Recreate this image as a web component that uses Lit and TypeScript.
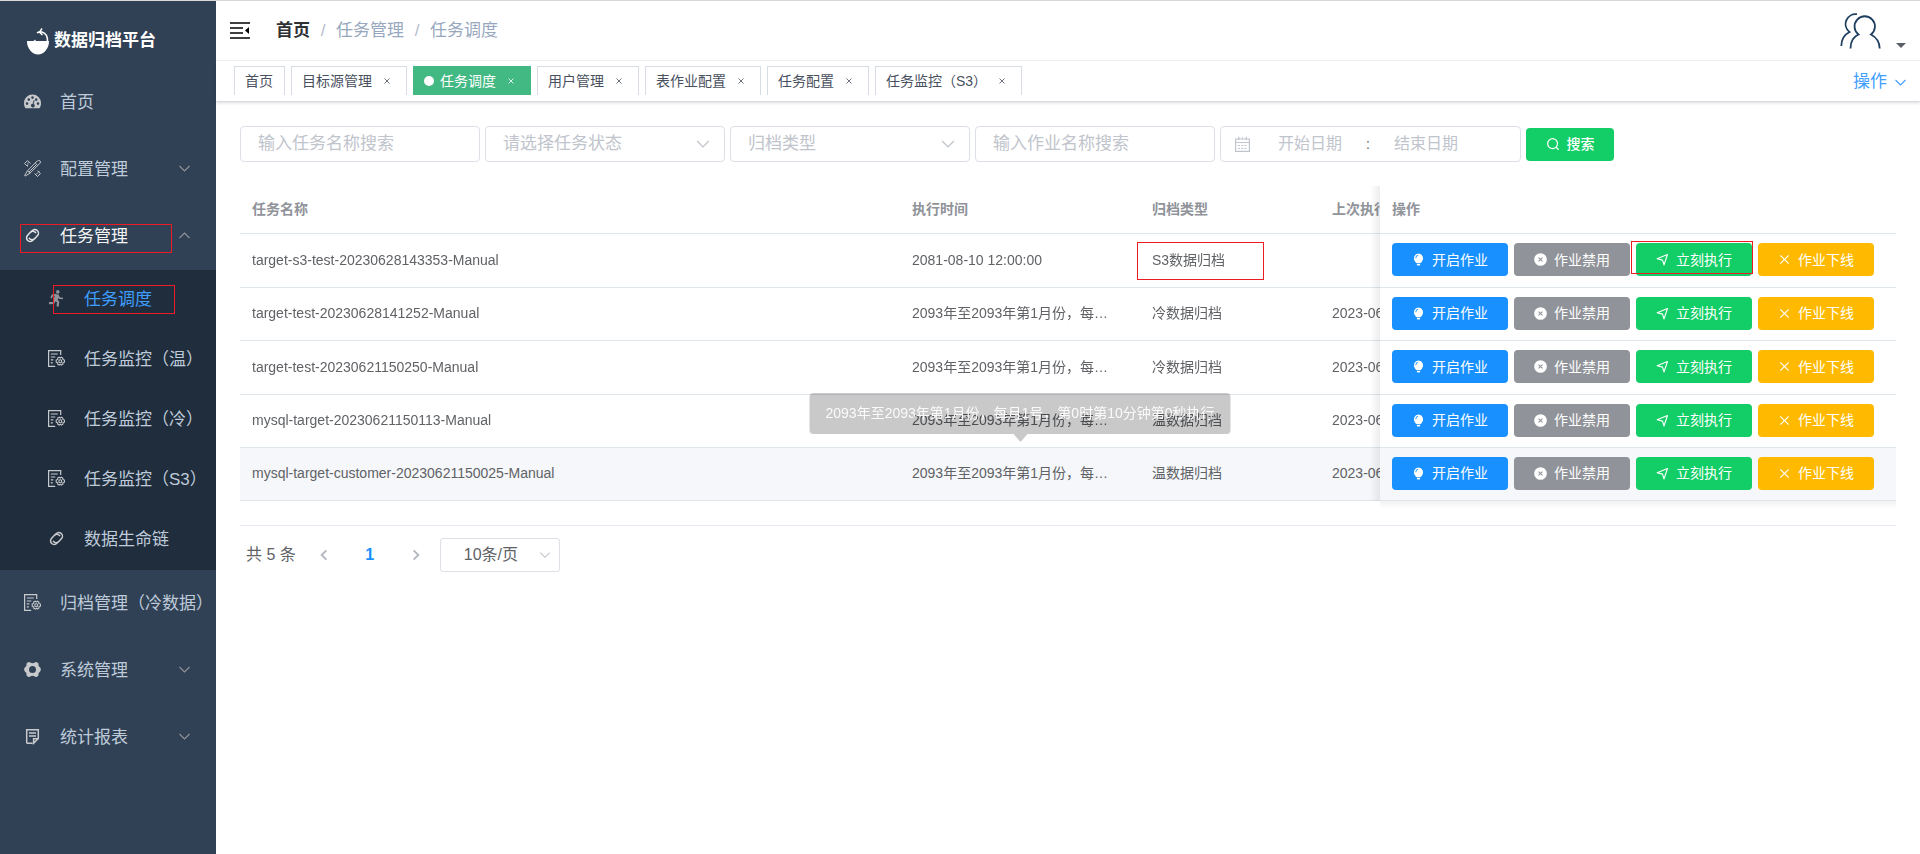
import { LitElement, html, svg, css, nothing } from 'lit';
import { customElement } from 'lit/decorators.js';
import { classMap } from 'lit/directives/class-map.js';

const icon = (name: string, size = 17) => html`
  <svg class="icon" width=${size} height=${size} viewBox="0 0 17 17" fill="none" stroke="currentColor"
    stroke-width="1.2" aria-hidden="true">${shapes[name]}</svg>`;

const shapes: Record<string, unknown> = {
  dashboard: svg`<path fill="currentColor" stroke="none" fill-rule="evenodd"
    d="M8.500 1.500A8.500 8.500 0 0 0 0 10c0 2 .5 3.700 1.400 5.300h14.200A9 9 0 0 0 17 10 8.500 8.500 0 0 0 8.500 1.500ZM3 9.300a1.300 1.300 0 1 1 0 2.600 1.300 1.300 0 0 1 0-2.600Zm1.800-4a1.300 1.300 0 1 1 0 2.600 1.300 1.300 0 0 1 0-2.600ZM8.500 3.300a1.300 1.300 0 1 1 0 2.600 1.300 1.300 0 0 1 0-2.600Zm5.500 6a1.300 1.300 0 1 1 0 2.600 1.300 1.300 0 0 1 0-2.600Zm-1.800-4a1.300 1.300 0 1 1 0 2.600 1.300 1.300 0 0 1 0-2.600ZM9.800 7l.8.2-.9 3.700a1.900 1.900 0 1 1-1-.2Z"/>`,
  tools: svg`<path stroke-width="1" d="m.6 3.500 2.900-2.900 3 3M10.500 13.500l3 3 2.900-2.900-3-3M.6 3.500l3 3M3 6l1.300-1.300M4.600 2.800 3.200 4.200M12 14.500l1.400-1.400M13.900 12.600l1.400-1.400M11.200 3 13.400.8a1.700 1.700 0 0 1 2.500 2.500L6 13.200l-4.900 2.900-.5-.5 2.900-4.900Z"/>
    <path stroke-width="1" d="m11.200 3 2.600 2.600M3.500 10.700 6 13.200M5 12l7-7"/>`,
  link: svg`<g transform="rotate(-48 8.500 8.500)" stroke-width="1.500">
    <path d="M7 11.900H5.200a3.600 3.600 0 0 1 0-7.200h4a3.600 3.600 0 0 1 3.400 4.800"/>
    <path d="M10 5.100h1.800a3.600 3.600 0 0 1 0 7.200h-4a3.600 3.600 0 0 1-3.400-4.800"/></g>`,
  run: svg`<g stroke-width="2.200" stroke-linejoin="round"><circle cx="9.800" cy="1.900" r="1.800" fill="currentColor" stroke="none"/>
    <path d="M8.800 5 7 9.500l3.200 2.300-.6 4.700M6.800 10.700 5.300 13 1 13.200"/>
    <path stroke-width="1.700" d="M8.300 4.800 4.500 5.200 3 8M9.700 5.500l2 2.700 3.200.2"/></g>
    <path fill="currentColor" stroke="none" d="m7 4.300 3.800.2.300 2.500-2 4.200L6 9.500Z"/>`,
  monitor: svg`<path d="M12.700 5V.6H.6v15.800h6.600"/><path d="M2.800 4h7M2.800 7h4.500M2.800 9.800h2.500M2.800 12.800h2"/>
    <g stroke-width="1.100"><circle cx="12.300" cy="11.200" r="1.500"/>
    <path d="m11.300 7.200 1 .9 1-.9 1.500.9.100 1.300 1.500.6v2.200l-1.500.7-.1 1.300-1.500.9-1-.9-1 .9-1.600-.9v-1.300l-1.500-.7V10l1.500-.6V8.100Z"/></g>`,
  gear: svg`<path fill="currentColor" stroke="none" fill-rule="evenodd"
    d="M4.200 1.200q1-.7 2 .2Q8.500 3 10.800 1.400q1-.9 2-.2l1.200.8q.8.800.5 1.800-.3 1.500 1.200 2.300 1 .6 1.200 2.400-.2 1.800-1.200 2.400-1.500.8-1.200 2.300.3 1-.5 1.800l-1.200.8q-1 .7-2-.2-2.300-1.600-4.600 0-1 .9-2 .2L3 15q-.8-.8-.5-1.800.3-1.500-1.200-2.300Q.3 10.300.1 8.500.3 6.700 1.300 6.100 2.800 5.300 2.500 3.800 2.200 2.800 3 2ZM8.500 5a3.500 3.500 0 1 0 0 7 3.500 3.500 0 0 0 0-7Z"/>`,
  report: svg`<path stroke-width="1.500" d="M8.500 15.300H3.300L2.700 14.700V1.700h11.600v8.800L9.600 15.300V10.800h4.600M5 5h7M5 8h7"/>`,
  down: svg`<path stroke-width="1.100" d="m3.500 6 5 5 5-5"/>`,
  up: svg`<path stroke-width="1.100" d="m3.500 11 5-5 5 5"/>`,
  left: svg`<path stroke-width="2" d="m11 3.500-5 5 5 5"/>`,
  right: svg`<path stroke-width="2" d="m6 3.500 5 5-5 5"/>`,
  calendar: svg`<path d="M1.600 3h13.800v12.400H1.600ZM1.600 6.500h13.800M4.700.8v3.400M12.300.8v3.400M8.500 1.500v1.500"/>
    <path stroke-dasharray="2 1.200" d="M4 9.500h9M4 12.500h9"/>`,
  search: svg`<circle cx="8" cy="8" r="6" stroke-width="1.500"/><path stroke-width="1.500" d="m12.300 12.500 3 3"/>`,
  bulb: svg`<path fill="currentColor" stroke="none" fill-rule="evenodd"
    d="M8.500.5A6.500 6.500 0 0 0 3.900 11Q5.300 12.300 5.500 13.200h6Q11.700 12.300 13.100 11A6.500 6.500 0 0 0 8.500.5ZM4.500 7Q4.500 3 8 2.500l.2.900Q5.600 4 5.500 7ZM6.300 14h4.400v1.300L9.800 16.500H7.200L6.300 15.300Z"/>`,
  ban: svg`<circle cx="8.500" cy="8.500" r="8.300" fill="currentColor" stroke="none"/><path stroke="#909399" stroke-width="1.400" d="m5.900 5.900 5.200 5.200M11.100 5.900l-5.200 5.200"/>`,
  send: svg`<path stroke-width="1.500" stroke-linejoin="round" d="M1.500 7.500 15 2 10.500 15.500 8.500 9.300Z"/>`,
  cross: svg`<path stroke-width="1.500" d="m3 3 11 11M14 3 3 14"/>`,
};

const closeMark = html`<svg width="16" height="16" viewBox="0 0 16 16" fill="none" stroke="currentColor" aria-hidden="true">
  <path d="m5.500 5.500 5 5M10.500 5.500l-5 5"/></svg>`;

const schedule = '2093年至2093年第1月份，每月1号，第0时第10分钟第0秒执行';

const submenu = [
  { icon: 'run', label: '任务调度', current: true },
  { icon: 'monitor', label: '任务监控（温）' },
  { icon: 'monitor', label: '任务监控（冷）' },
  { icon: 'monitor', label: '任务监控（S3）' },
  { icon: 'link', label: '数据生命链' },
];

const tabs = ['首页', '目标源管理', '任务调度', '用户管理', '表作业配置', '任务配置', '任务监控（S3）'];

const jobs = [
  { name: 'target-s3-test-20230628143353-Manual', time: '2081-08-10 12:00:00', type: 'S3数据归档', last: '', marked: true },
  { name: 'target-test-20230628141252-Manual', time: schedule, type: '冷数据归档', last: '2023-06-28 14:12:52' },
  { name: 'target-test-20230621150250-Manual', time: schedule, type: '冷数据归档', last: '2023-06-21 15:02:50' },
  { name: 'mysql-target-20230621150113-Manual', time: schedule, type: '温数据归档', last: '2023-06-21 15:01:13' },
  { name: 'mysql-target-customer-20230621150025-Manual', time: schedule, type: '温数据归档', last: '2023-06-21 15:00:25', hovered: true },
];

const actions = [
  { icon: 'bulb', label: '开启作业', tone: 'primary' },
  { icon: 'ban', label: '作业禁用', tone: 'info' },
  { icon: 'send', label: '立刻执行', tone: 'success' },
  { icon: 'cross', label: '作业下线', tone: 'warning' },
];

const base = css`
  :host { display: block; box-sizing: border-box; }
  *, *::before, *::after { box-sizing: border-box; }
  button, input, select { font: inherit; color: inherit; margin: 0; padding: 0; border: 0; background: none; }
  button, select { cursor: pointer; }
  a { color: inherit; text-decoration: none; }
  .icon { display: block; flex: none; }
  .mark { position: absolute; border: 1px solid #ed1c24; pointer-events: none; }
`;

@customElement('side-menu')
class SideMenu extends LitElement {
  static styles = [base, css`
    :host { background: #304156; color: #bfcbd9; font-size: 17px; line-height: 24px; }
    .brand { display: flex; align-items: center; gap: 5px; height: 68px; padding: 12px 0 0 27px; color: #fff;
      font-size: 17px; font-weight: 700; }
    .item { position: relative; display: flex; align-items: center; width: 100%; height: 67px; padding: 0 24px;
      white-space: nowrap; text-align: left; }
    .label { margin-left: 19px; }
    .item .icon { margin-bottom: 3px; color: #c8c9cc; }
    .open { color: #f4f4f5; }
    .item.open .icon { color: #e4e4e6; }
    .item .arrow { position: absolute; right: 23px; }
    .item .arrow .icon { color: #909399; }
    .sub { background: #1f2d3d; }
    .sub .item { height: 60px; padding-left: 48px; }
    .current { color: #409eff; }
    .sub .current .icon { color: #909399; }
    .group-mark { top: 21px; left: 20px; width: 152px; height: 29px; }
    .item-mark { top: 15px; left: 53px; width: 122px; height: 29px; }
  `];

  group(name: string, label: string) {
    return html`<button class="item">${icon(name)}<span class="label">${label}</span>
      <span class="arrow">${icon('down', 17)}</span></button>`;
  }

  render() {
    return html`
      <div class="brand">
        <svg width="22" height="27" viewBox="0 0 22 27" aria-hidden="true">
          <path fill="#fff" d="M0 13h6q1.500-.2 2-1.500l1 1.500H22A11 13.500 0 0 1 0 13Z"/>
          <path fill="none" stroke="#fff" stroke-width="1.500" d="M20.500 13.500Q21 6 15 4 12 3.500 10 5M15 .5l-2.500 3.700 3 2.800"/>
        </svg>
        <span>数据归档平台</span>
      </div>
      <nav>
        <a class="item" href="#">${icon('dashboard')}<span class="label">首页</span></a>
        ${this.group('tools', '配置管理')}
        <button class="item open" aria-expanded="true">${icon('link')}<span class="label">任务管理</span>
          <span class="arrow">${icon('up', 17)}</span><span class="mark group-mark"></span></button>
        <div class="sub">
          ${submenu.map((s) => html`
            <a class=${classMap({ item: true, current: !!s.current })} href="#">${icon(s.icon)}<span class="label">${s.label}</span>
              ${s.current ? html`<span class="mark item-mark"></span>` : nothing}</a>`)}
        </div>
        <a class="item" href="#">${icon('monitor')}<span class="label">归档管理（冷数据）</span></a>
        ${this.group('gear', '系统管理')}
        ${this.group('report', '统计报表')}
      </nav>`;
  }
}

@customElement('top-bar')
class TopBar extends LitElement {
  static styles = [base, css`
    .head { display: flex; align-items: center; height: 60px; padding: 0 14px; border-bottom: 1px solid #f4f4f6; }
    .toggle { display: flex; }
    .crumbs { display: flex; gap: 10px; margin-left: 26px; font-size: 17px; line-height: 24px; color: #97a8be; }
    .crumbs a { color: #303133; font-weight: 700; }
    .sep { width: 6px; text-align: center; color: #b4bccc; }
    .user { display: flex; align-items: flex-end; gap: 15px; margin-left: auto; }
    .caret { margin: 0 0 1px; border: 5px solid transparent; border-top-color: #5a5e66; border-bottom: 0; }
    .tabs { display: flex; align-items: flex-start; gap: 6px; height: 41px; padding: 5px 11px 0 18px;
      border-bottom: 1px solid #d8dce5; box-shadow: 0 1px 3px rgba(0, 0, 0, .14); }
    .tab { display: flex; align-items: center; height: 29px; padding: 0 11px 0 10px; border: 1px solid #d8dce5; border-bottom: 0;
      font-size: 14px; line-height: 20px; color: #495060; white-space: nowrap; }
    .tab.active { background: #42b983; border-color: #42b983; color: #fff; }
    .dot { width: 10px; height: 10px; margin-right: 6px; border-radius: 50%; background: #fff; }
    .close { display: flex; margin-left: 7px; opacity: .8; }
    .ops { display: flex; align-items: center; gap: 5px; margin: 4px 0 0 auto; color: #409eff; font-size: 17px; line-height: 24px; }
  `];

  render() {
    return html`
      <header class="head">
        <button class="toggle" aria-label="折叠菜单">
          <svg width="20" height="18" viewBox="0 0 20 18" aria-hidden="true">
            <path stroke="#000" stroke-width="1.500" d="M0 1h20M0 6h13M0 11h13M0 16h20"/><path d="m15 8.500 4-3.500v7z"/>
          </svg>
        </button>
        <nav class="crumbs" aria-label="路径">
          <a href="#">首页</a><span class="sep">/</span><span>任务管理</span><span class="sep">/</span><span>任务调度</span>
        </nav>
        <button class="user" aria-label="用户">
          <svg width="41" height="36" viewBox="0 0 41 36" fill="none" stroke="#1f3f60" stroke-width="1.800" aria-hidden="true">
            <path d="M10.500 35.500Q10.500 25 18.500 21.500A10.200 10.200 0 1 1 31 21.500Q39.500 26 39.700 35.500"/>
            <path d="M17 1.200A10 10 0 0 0 9.500 19Q1.500 23 1.300 33"/>
          </svg>
          <span class="caret"></span>
        </button>
      </header>
      <nav class="tabs" aria-label="标签页">
        ${tabs.map((t, i) => html`
          <div class=${classMap({ tab: true, active: t === '任务调度' })}>
            ${t === '任务调度' ? html`<span class="dot"></span>` : nothing}
            <a href="#">${t}</a>
            ${i ? html`<button class="close" aria-label="关闭">${closeMark}</button>` : nothing}
          </div>`)}
        <button class="ops">操作${icon('down', 17)}</button>
      </nav>`;
  }
}

@customElement('job-page')
class JobPage extends LitElement {
  static styles = [base, css`
    :host { padding: 24px; color: #606266; font-size: 14px; line-height: 20px; }
    .filters { display: flex; align-items: center; gap: 5px; }
    .field { display: grid; align-items: center; width: 240px; height: 36px; border: 1px solid #dcdfe6; border-radius: 4px;
      font-size: 17px; color: #c0c4cc; }
    .field > * { grid-area: 1 / 1; }
    .field input, .field select { width: 100%; height: 32px; padding: 0 17px; outline: 0; appearance: none; }
    .field .icon { justify-self: end; margin-right: 11px; pointer-events: none; }
    ::placeholder { color: #c0c4cc; opacity: 1; }
    .range { display: flex; align-items: center; width: 301px; height: 36px; padding: 0 13px; border: 1px solid #dcdfe6;
      border-radius: 4px; font-size: 16px; color: #c0c4cc; }
    .range input { width: 100px; height: 32px; text-align: center; outline: 0; }
    .range .icon { margin-right: 9px; }
    .colon { width: 16px; text-align: center; color: #606266; font-size: 14px; }
    .btn { display: inline-flex; align-items: center; justify-content: center; gap: 7px; height: 33px; border-radius: 4px;
      color: #fff; font-size: 14px; line-height: 20px; white-space: nowrap; }
    .search { width: 88px; font-weight: 500; background: #13ce66; }
    .primary { background: #1890ff; }
    .info { background: #909399; }
    .success { background: #13ce66; }
    .warning { background: #ffba00; }
    .scroll { margin-top: 24px; padding-bottom: 24px; overflow: hidden; border-bottom: 1px solid #e6ebf5; }
    table { width: calc(100% + 120px); table-layout: fixed; border-collapse: separate; border-spacing: 0; }
    th, td { position: relative; height: 53px; padding: 0 12px 2px; border-bottom: 1px solid #dfe6ec; text-align: left; white-space: nowrap; }
    th { height: 48px; color: #909399; font-weight: 700; }
    tbody tr:nth-child(-2n + 3) td { height: 54px; }
    .c-time { width: 240px; }
    .c-type, .c-last { width: 180px; }
    .c-act { width: 516px; }
    .cut { display: block; max-width: 204px; overflow: hidden; text-overflow: ellipsis; }
    .fixed { position: sticky; right: 0; background: #fff; }
    .fixed::before { content: ''; position: absolute; top: 0; bottom: -1px; left: -10px; width: 10px;
      background: linear-gradient(to left, rgba(0, 0, 0, .07), transparent); }
    tr:last-child td.fixed::after { content: ''; position: absolute; top: calc(100% + 1px); left: 0; right: 0; height: 8px;
      background: linear-gradient(rgba(0, 0, 0, .05), transparent); }
    .hovered td { background: #f5f7fa; }
    .buttons { display: flex; gap: 6px; }
    .slot { position: relative; display: flex; }
    .slot .btn { width: 116px; }
    .type-mark { top: 8px; left: -3px; width: 127px; height: 38px; }
    .run-mark { top: -2px; left: -5px; width: 122px; height: 33px; }
    .tip { position: absolute; z-index: 2; bottom: calc(100% + 14px); left: 50%; transform: translateX(-50%); padding: 10px 16px;
      border-radius: 4px; background: rgba(0, 0, 0, .21); color: #fafafa; line-height: 21px; }
    .tip::after { content: ''; position: absolute; top: 100%; left: 50%; margin-left: -7px; border: 7px solid transparent;
      border-top: 8px solid rgba(0, 0, 0, .21); border-bottom: 0; }
    .pager { display: flex; align-items: center; padding: 12px 6px; font-size: 16px; line-height: 24px; }
    .pager button { display: flex; justify-content: center; width: 46px; }
    .total { margin-right: 5px; }
    .pager .arrow { color: #b4b8c0; }
    .pager .page { color: #1890ff; font-weight: 700; }
    .size { display: grid; align-items: center; width: 120px; height: 34px; margin-left: 1px; border: 1px solid #dcdfe6; border-radius: 3px; }
    .size > * { grid-area: 1 / 1; }
    .size select { width: 100%; height: 32px; padding-left: 23px; appearance: none; outline: 0; }
    .size .icon { justify-self: end; margin-right: 6px; color: #c0c4cc; pointer-events: none; }
  `];

  select(label: string) {
    return html`<label class="field"><select aria-label=${label}><option>${label}</option></select>${icon('down', 20)}</label>`;
  }

  render() {
    return html`
      <form class="filters" @submit=${(e: Event) => e.preventDefault()}>
        <label class="field"><input placeholder="输入任务名称搜索" aria-label="任务名称"></label>
        ${this.select('请选择任务状态')}
        ${this.select('归档类型')}
        <label class="field"><input placeholder="输入作业名称搜索" aria-label="作业名称"></label>
        <div class="range">${icon('calendar', 17)}
          <input placeholder="开始日期" aria-label="开始日期"><span class="colon">:</span>
          <input placeholder="结束日期" aria-label="结束日期"></div>
        <button class="btn search">${icon('search', 14)}搜索</button>
      </form>
      <div class="scroll">
        <table>
          <thead><tr>
            <th>任务名称</th><th class="c-time">执行时间</th><th class="c-type">归档类型</th>
            <th class="c-last">上次执行时间</th><th class="c-act fixed">操作</th>
          </tr></thead>
          <tbody>
            ${jobs.map((j) => html`
              <tr class=${classMap({ hovered: !!j.hovered })}>
                <td>${j.name}</td>
                <td><span class="cut">${j.time}</span>
                  ${j.hovered ? html`<div class="tip" role="tooltip">${schedule}</div>` : nothing}</td>
                <td>${j.type}${j.marked ? html`<span class="mark type-mark"></span>` : nothing}</td>
                <td>${j.last}</td>
                <td class="fixed"><div class="buttons">
                  ${actions.map((a) => html`<span class="slot"><button class="btn ${a.tone}">${icon(a.icon, 13)}${a.label}</button>
                    ${j.marked && a.icon === 'send' ? html`<span class="mark run-mark"></span>` : nothing}</span>`)}
                </div></td>
              </tr>`)}
          </tbody>
        </table>
      </div>
      <nav class="pager" aria-label="分页">
        <span class="total">共 5 条</span>
        <button class="arrow" aria-label="上一页">${icon('left', 16)}</button>
        <button class="page">1</button>
        <button class="arrow" aria-label="下一页">${icon('right', 16)}</button>
        <label class="size"><select aria-label="每页条数"><option>10条/页</option></select>${icon('down', 16)}</label>
      </nav>`;
  }
}

@customElement('app-root')
class AppRoot extends LitElement {
  static styles = [base, css`
    :host { display: grid; grid-template-columns: 216px minmax(0, 1fr); min-height: 100vh; border-top: 1px solid #d8d8d8;
      background: #fff; font-family: "Liberation Sans", "Noto Sans CJK SC", sans-serif; }
  `];

  render() {
    return html`<side-menu></side-menu><main><top-bar></top-bar><job-page></job-page></main>`;
  }
}
